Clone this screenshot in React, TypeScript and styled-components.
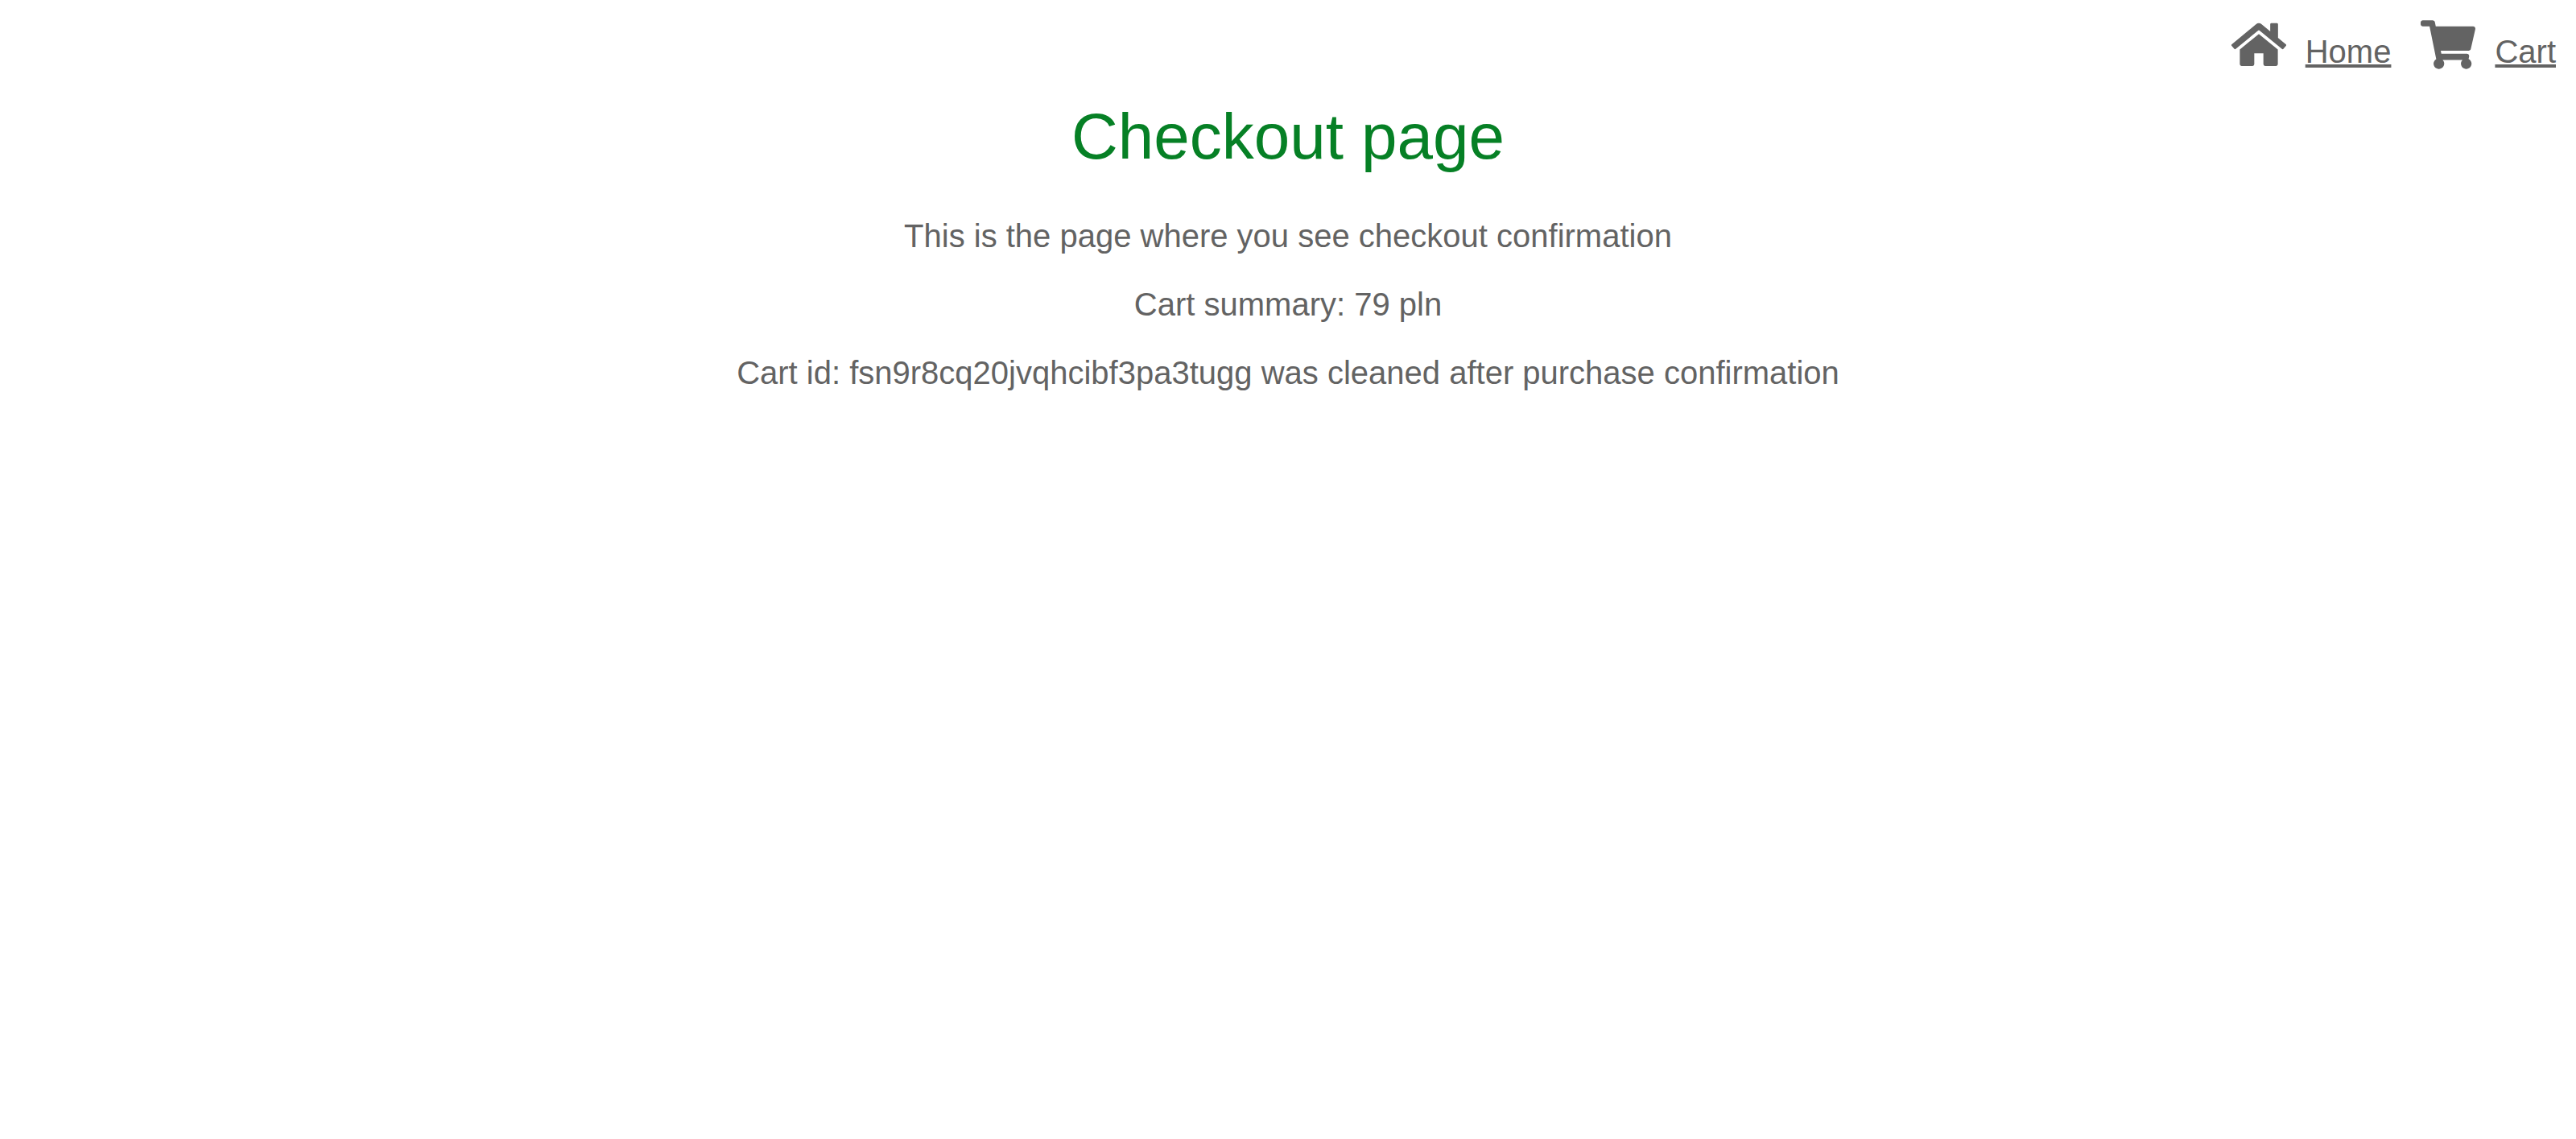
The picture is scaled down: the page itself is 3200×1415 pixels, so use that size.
import React from "react";
import { createGlobalStyle, styled } from "styled-components";

const GlobalStyle = createGlobalStyle`
  body {
    margin: 0;
    background: #fff;
    color: #636363;
    font-family: "Liberation Sans", Arial, sans-serif;
    font-size: 40px;
    line-height: 45px;
  }
`;

const Nav = styled.nav`
  display: flex;
  justify-content: flex-end;
  gap: 37px;
  padding: 25px 25px 0;
`;

const NavLink = styled.a`
  display: flex;
  align-items: flex-start;
  gap: 24px;
  color: inherit;
  text-decoration: none;
`;

const NavIcon = styled.svg`
  width: 68px;
  height: 61px;
  fill: currentColor;
`;

const NavText = styled.span`
  padding-top: 17px;
  text-decoration: underline;
  text-decoration-thickness: 4px;
  text-underline-offset: 2px;
`;

const Main = styled.main`
  text-align: center;
`;

const Title = styled.h1`
  margin: 38px 0 56px;
  color: #068025;
  font-size: 80px;
  font-weight: 400;
  line-height: 90px;
`;

const Line = styled.p`
  margin: 40px 0;
`;

export default function App() {
  return (
    <>
      <GlobalStyle />
      <Nav>
        <NavLink href="#home">
          <NavIcon viewBox="0 0 576 512" aria-hidden="true">
            <path d="M288 143L88 306V462a18 18 0 0 0 18 18h116a18 18 0 0 0 18-18V346h96v116a18 18 0 0 0 18 18h116a18 18 0 0 0 18-18V306z" />
            <path d="M571.6 251.47L490 184V42a12 12 0 0 0-12-12h-58a12 12 0 0 0-12 12v74.6L318.47 43a48 48 0 0 0-61 0L4.34 251.47a12 12 0 0 0-1.6 16.9l25.5 31A12 12 0 0 0 45.15 301l235.22-193.74a12.19 12.19 0 0 1 15.3 0L530.9 301a12 12 0 0 0 16.9-1.6l25.5-31a12 12 0 0 0-1.7-16.93z" />
          </NavIcon>
          <NavText>Home</NavText>
        </NavLink>
        <NavLink href="#cart">
          <NavIcon viewBox="0 0 576 512" aria-hidden="true">
            <path d="M528.12 301.319l47.273-208C578.806 78.301 567.391 64 551.99 64H159.208l-9.166-44.81C147.758 8.021 137.93 0 126.529 0H24C10.745 0 0 10.745 0 24v16c0 13.255 10.745 24 24 24h69.883l70.248 343.435C147.325 417.1 136 435.222 136 456c0 30.928 25.072 56 56 56s56-25.072 56-56c0-15.674-6.447-29.835-16.824-40h209.647C430.447 426.165 424 440.326 424 456c0 30.928 25.072 56 56 56s56-25.072 56-56c0-22.172-12.888-41.332-31.579-50.405l5.517-24.276c3.413-15.018-8.002-29.319-23.403-29.319H218.117l-6.545-32h293.145c11.206 0 20.92-7.754 23.403-18.681z" />
          </NavIcon>
          <NavText>Cart</NavText>
        </NavLink>
      </Nav>
      <Main>
        <Title>Checkout page</Title>
        <Line>This is the page where you see checkout confirmation</Line>
        <Line>Cart summary: 79 pln</Line>
        <Line>Cart id: fsn9r8cq20jvqhcibf3pa3tugg was cleaned after purchase confirmation</Line>
      </Main>
    </>
  );
}
